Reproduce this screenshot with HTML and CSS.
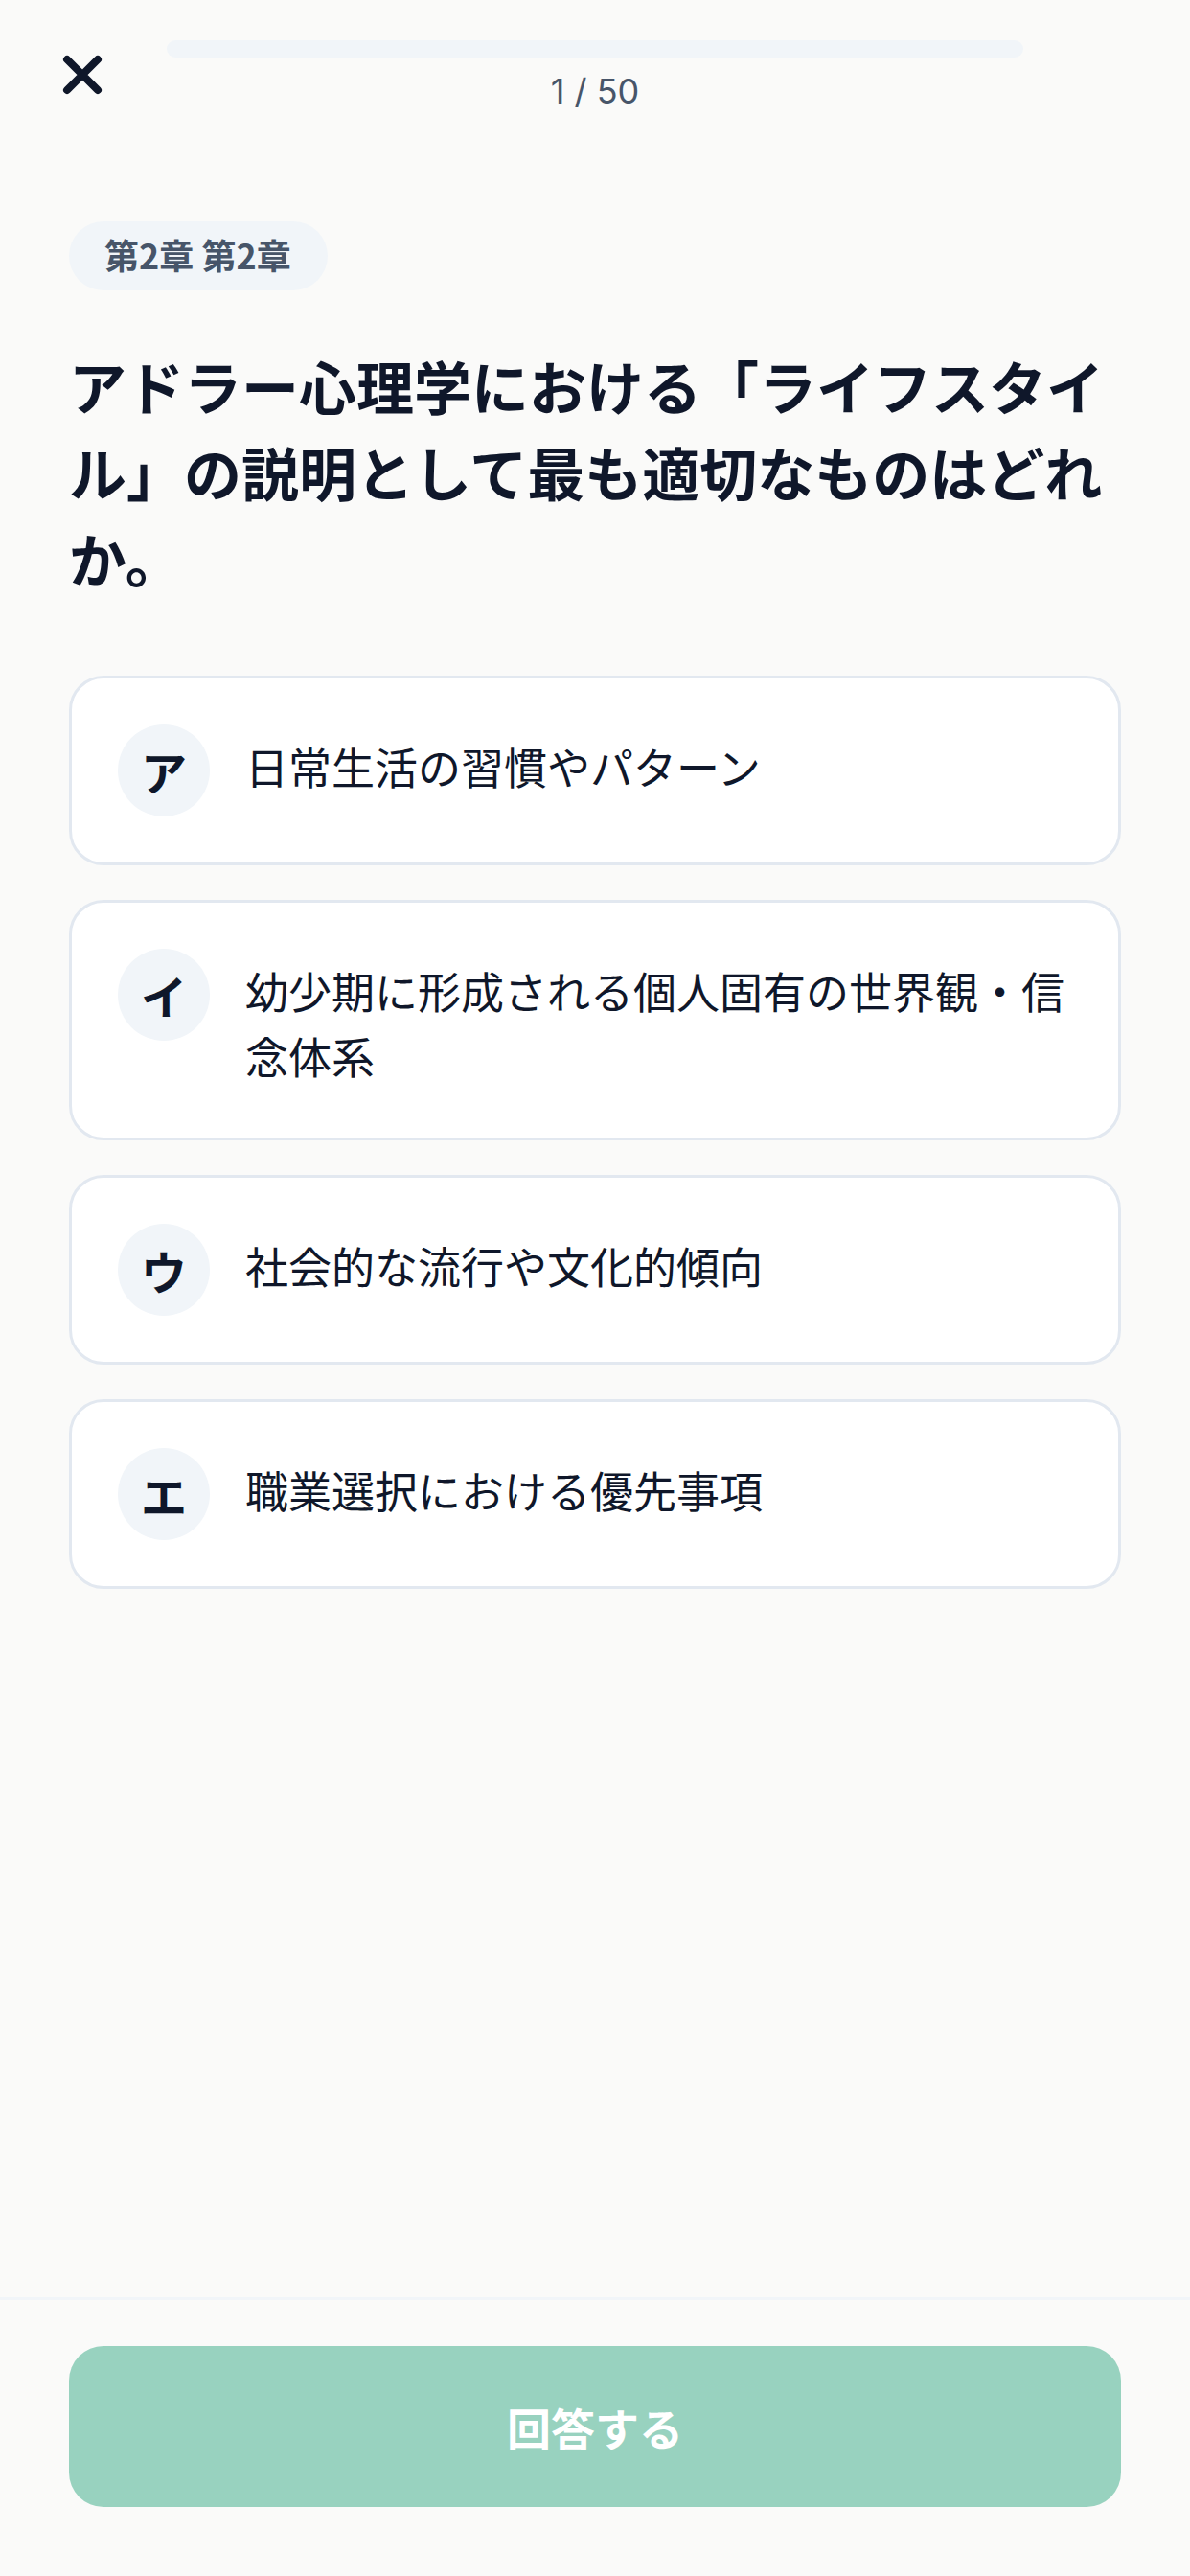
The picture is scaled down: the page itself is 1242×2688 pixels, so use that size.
FILE: index.html
```html
<!DOCTYPE html>
<html lang="ja">
<head>
<meta charset="utf-8">
<title>Quiz</title>
<link rel="stylesheet" href="styles.css">
</head>
<body>
<div class="screen">
  <header class="header">
    <button class="close" aria-label="閉じる">
      <svg width="42" height="42" viewBox="0 0 42 42"><path d="M5 5 L37 37 M37 5 L5 37" stroke="#0F172A" stroke-width="8" stroke-linecap="round" fill="none"/></svg>
    </button>
    <div class="progress">
      <div class="track"></div>
      <div class="count">1 / 50</div>
    </div>
    <div class="spacer"></div>
  </header>

  <main class="content">
    <div class="chip">第2章 第2章</div>
    <h1 class="question">アドラー心理学における「ライフスタイル」の説明として最も適切なものはどれか。</h1>
    <div class="options">
      <div class="option">
        <div class="badge">ア</div>
        <div class="option-text">日常生活の習慣やパターン</div>
      </div>
      <div class="option">
        <div class="badge">イ</div>
        <div class="option-text">幼少期に形成される個人固有の世界観・信念体系</div>
      </div>
      <div class="option">
        <div class="badge">ウ</div>
        <div class="option-text">社会的な流行や文化的傾向</div>
      </div>
      <div class="option">
        <div class="badge">エ</div>
        <div class="option-text">職業選択における優先事項</div>
      </div>
    </div>
  </main>

  <footer class="footer">
    <button class="submit">回答する</button>
  </footer>
</div>
</body>
</html>
```

FILE: styles.css
```css
html, body {
  margin: 0;
  padding: 0;
  background: #FAFAF9;
}

body {
  font-family: "Noto Sans CJK JP", "Noto Sans", sans-serif;
  color: #0F172A;
}

.screen {
  width: 1242px;
  height: 2688px;
  display: flex;
  flex-direction: column;
  box-sizing: border-box;
}

.header {
  display: flex;
  align-items: flex-start;
  padding: 42px 48px 0;
}

.close {
  width: 72px;
  height: 72px;
  padding: 0 0 0 4px;
  border: none;
  background: transparent;
  display: flex;
  align-items: center;
  justify-content: center;
  flex: none;
}

.close svg {
  display: block;
}

.progress {
  flex: 1;
  margin: 0 54px;
  display: flex;
  flex-direction: column;
  align-items: center;
}

.track {
  width: 100%;
  height: 18px;
  border-radius: 9px;
  background: #F1F5F9;
}

.count {
  margin-top: 11px;
  font-family: "Inter", "Roboto", sans-serif;
  font-size: 36px;
  line-height: 48px;
  color: #475569;
}

.spacer {
  width: 72px;
  flex: none;
}

.content {
  flex: 1;
  padding: 112px 72px 0;
  display: flex;
  flex-direction: column;
  align-items: flex-start;
}

.chip {
  background: #F1F5F9;
  color: #475569;
  font-size: 36px;
  font-weight: 700;
  line-height: 48px;
  padding: 10px 38px 14px 37px;
  border-radius: 36px;
}

.question {
  margin: 54px 0 0;
  font-size: 60px;
  font-weight: 700;
  line-height: 90px;
  color: #0F172A;
  width: 100%;
}

.options {
  margin-top: 78px;
  width: 100%;
  display: flex;
  flex-direction: column;
  gap: 36px;
}

.option {
  display: flex;
  align-items: flex-start;
  gap: 37px;
  background: #FFFFFF;
  border: 3px solid #E2E8F0;
  border-radius: 36px;
  padding: 48px;
}

.badge {
  width: 96px;
  height: 96px;
  flex: none;
  border-radius: 50%;
  background: #F1F5F9;
  display: flex;
  align-items: center;
  justify-content: center;
  font-size: 48px;
  font-weight: 700;
  line-height: 96px;
  color: #0F172A;
}

.option-text {
  flex: 1;
  font-size: 45px;
  line-height: 67.5px;
  padding: 10px 0 4px;
  color: #0F172A;
}

.footer {
  border-top: 3px solid #F1F5F9;
  padding: 48px 72px 72px;
}

.submit {
  display: block;
  width: 100%;
  height: 168px;
  border: none;
  border-radius: 36px;
  background: #98D2BF;
  color: #FFFFFF;
  font-family: "Noto Sans CJK JP", sans-serif;
  font-size: 46px;
  font-weight: 700;
  padding: 0;
}
```
